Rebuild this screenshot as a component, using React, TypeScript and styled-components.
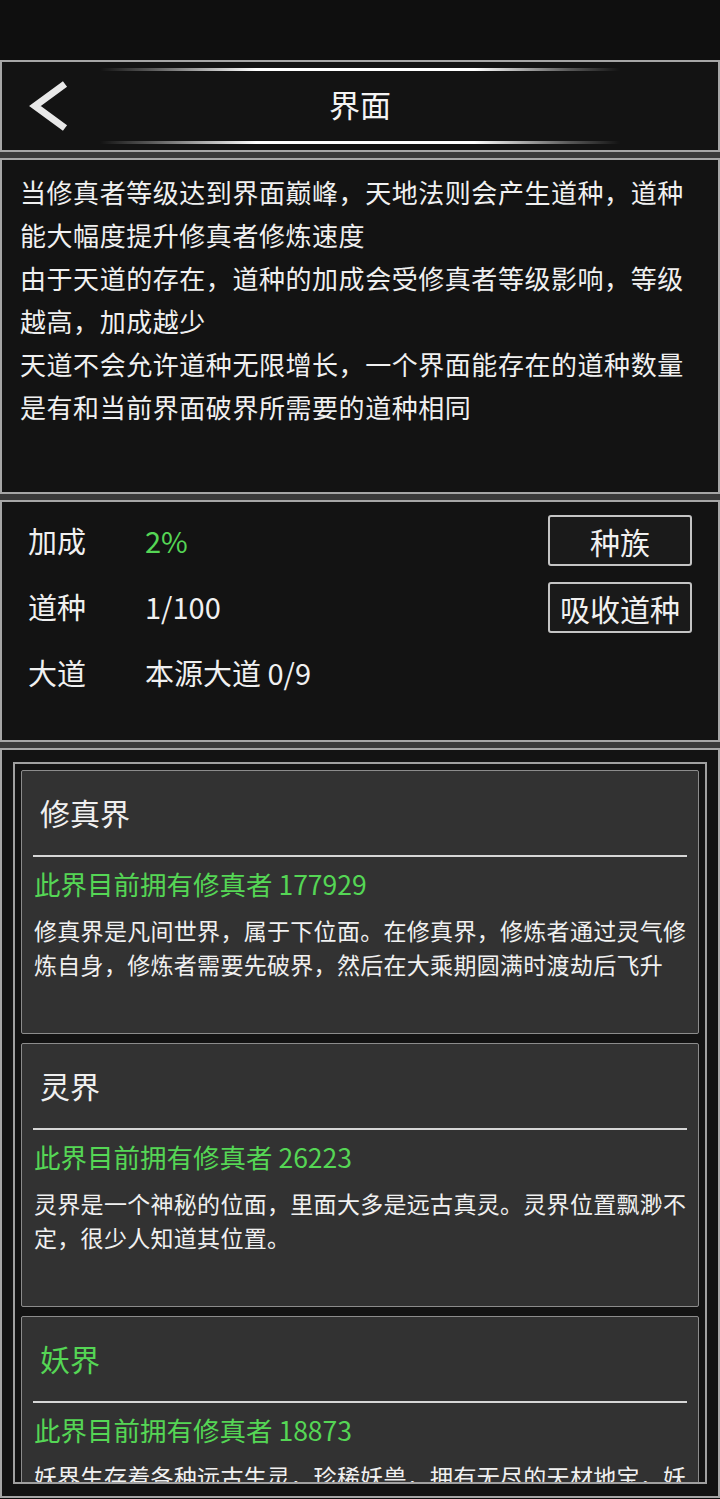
import React from "react";
import styled, { createGlobalStyle } from "styled-components";

const green = "#55d655";
const textColor = "#f0f0f0";

const GlobalStyle = createGlobalStyle`
  html, body {
    margin: 0;
    padding: 0;
    background: #0f0f0f;
    font-family: "Noto Sans CJK SC", "Noto Sans", sans-serif;
    color: ${textColor};
  }
  * {
    box-sizing: border-box;
  }
`;

const StatusBar = styled.div`
  height: 60px;
  background: #0f0f0f;
`;

const Page = styled.div`
  display: flex;
  flex-direction: column;
  gap: 6px;
  background: #3a3a3a;
`;

const Panel = styled.section<{ $height?: number }>`
  border: 2px solid #a6a6a6;
  background: #131313;
  height: ${(p) => (p.$height ? `${p.$height}px` : "auto")};
`;

const Header = styled(Panel)`
  display: flex;
  flex-direction: column;
  padding: 6px 0;
`;

const GlowLine = styled.div`
  width: 520px;
  height: 3px;
  margin: 0 auto;
  background: linear-gradient(
    90deg,
    rgba(255, 255, 255, 0) 0%,
    rgba(255, 255, 255, 0.3) 10%,
    #ffffff 30%,
    #ffffff 72%,
    rgba(255, 255, 255, 0.3) 90%,
    rgba(255, 255, 255, 0) 100%
  );
`;

const HeaderRow = styled.div`
  height: 70px;
  display: grid;
  grid-template-columns: 1fr auto 1fr;
  align-items: center;
`;

const BackButton = styled.button`
  justify-self: start;
  margin-left: 24px;
  padding: 0;
  border: none;
  background: none;
  display: flex;
  cursor: pointer;
`;

const Title = styled.h1`
  margin: 0 0 5px;
  font-size: 31px;
  font-weight: 400;
  color: #f4f4f4;
`;

const Intro = styled(Panel)`
  padding: 10px 18px 0 18px;
  font-size: 26px;
  letter-spacing: 0.55px;
  line-height: 43px;
`;

const IntroLine = styled.p`
  margin: 0;
`;

const Stats = styled(Panel)`
  display: flex;
  justify-content: space-between;
  padding: 5px 26px 0 26px;
`;

const StatList = styled.div`
  display: flex;
  flex-direction: column;
`;

const StatRow = styled.div`
  display: grid;
  grid-template-columns: 117px auto;
  align-items: center;
  height: 66px;
  font-size: 29px;
`;

const StatValue = styled.span<{ $green?: boolean }>`
  color: ${(p) => (p.$green ? green : textColor)};
`;

const Actions = styled.div`
  display: flex;
  flex-direction: column;
  gap: 16px;
  padding-top: 8px;
`;

const ActionButton = styled.button`
  width: 144px;
  height: 51px;
  border: 2px solid #c4c4c4;
  border-radius: 3px;
  background: #1a1a1a;
  color: ${textColor};
  font-family: inherit;
  font-size: 30px;
  padding: 0;
  line-height: 1;
  cursor: pointer;
`;

const ListPanel = styled(Panel)`
  padding: 12px 11px;
`;

const ScrollBox = styled.div`
  height: 722px;
  border: 2px solid #a0a0a0;
  padding: 6px;
  overflow: hidden;
  display: flex;
  flex-direction: column;
  gap: 9px;
`;

const Card = styled.div`
  flex: 0 0 264px;
  background: #323232;
  border: 1px solid #8c8c8c;
  border-radius: 2px;
  display: flex;
  flex-direction: column;
`;

const CardTitle = styled.h2<{ $green?: boolean }>`
  margin: 0;
  height: 84px;
  padding: 0 18px 2px;
  display: flex;
  align-items: center;
  font-size: 30px;
  font-weight: 400;
  color: ${(p) => (p.$green ? green : textColor)};
`;

const Divider = styled.hr`
  margin: 0 11px;
  height: 2px;
  border: none;
  background: #d6d6d6;
`;

const Population = styled.div`
  margin-top: 9px;
  padding: 0 12px;
  line-height: 36px;
  font-size: 26.5px;
  color: ${green};
`;

const CardText = styled.p`
  margin: 11px 0 0;
  padding: 0 10px 0 12px;
  font-size: 23px;
  letter-spacing: 0.3px;
  line-height: 34px;
  color: ${textColor};
`;

const introLines = [
  "当修真者等级达到界面巅峰，天地法则会产生道种，道种能大幅度提升修真者修炼速度",
  "由于天道的存在，道种的加成会受修真者等级影响，等级越高，加成越少",
  "天道不会允许道种无限增长，一个界面能存在的道种数量是有和当前界面破界所需要的道种相同",
];

const realms = [
  {
    name: "修真界",
    count: 177929,
    current: false,
    text: "修真界是凡间世界，属于下位面。在修真界，修炼者通过灵气修炼自身，修炼者需要先破界，然后在大乘期圆满时渡劫后飞升",
  },
  {
    name: "灵界",
    count: 26223,
    current: false,
    text: "灵界是一个神秘的位面，里面大多是远古真灵。灵界位置飘渺不定，很少人知道其位置。",
  },
  {
    name: "妖界",
    count: 18873,
    current: true,
    text: "妖界生存着各种远古生灵，珍稀妖兽，拥有无尽的天材地宝，妖族强者辈出，是修炼者向往之地。",
  },
];

const BackIcon = () => (
  <svg width="44" height="56" viewBox="0 0 44 56">
    <polyline
      points="39,6 9,28 39,50"
      fill="none"
      stroke="#e8e8e8"
      strokeWidth="7"
      strokeLinejoin="miter"
    />
  </svg>
);

const App = (): JSX.Element => {
  return (
    <React.Fragment>
      <GlobalStyle />
      <StatusBar />
      <Page>
        <Header $height={92}>
          <GlowLine />
          <HeaderRow>
            <BackButton aria-label="返回">
              <BackIcon />
            </BackButton>
            <Title>界面</Title>
            <span />
          </HeaderRow>
          <GlowLine />
        </Header>

        <Intro $height={336}>
          {introLines.map((line) => (
            <IntroLine key={line}>{line}</IntroLine>
          ))}
        </Intro>

        <Stats $height={242}>
          <StatList>
            <StatRow>
              <span>加成</span>
              <StatValue $green>2%</StatValue>
            </StatRow>
            <StatRow>
              <span>道种</span>
              <StatValue>1/100</StatValue>
            </StatRow>
            <StatRow>
              <span>大道</span>
              <StatValue>本源大道 0/9</StatValue>
            </StatRow>
          </StatList>
          <Actions>
            <ActionButton>种族</ActionButton>
            <ActionButton>吸收道种</ActionButton>
          </Actions>
        </Stats>

        <ListPanel $height={750}>
          <ScrollBox>
            {realms.map((realm) => (
              <Card key={realm.name}>
                <CardTitle $green={realm.current}>{realm.name}</CardTitle>
                <Divider />
                <Population>此界目前拥有修真者 {realm.count}</Population>
                <CardText>{realm.text}</CardText>
              </Card>
            ))}
          </ScrollBox>
        </ListPanel>
      </Page>
    </React.Fragment>
  );
};

export default App;
